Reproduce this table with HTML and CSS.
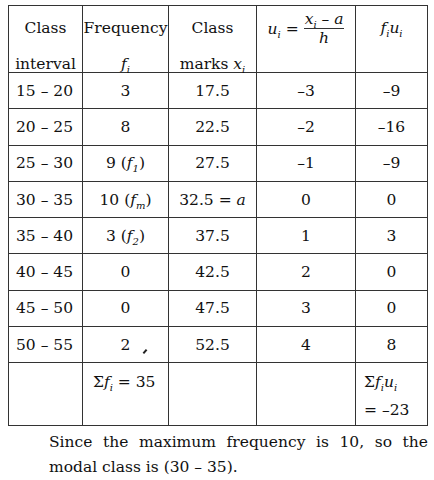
FILE: index.html
```html
<!DOCTYPE html>
<html lang="en">
<head>
  <meta charset="UTF-8" />
  <title>Modal class table</title>
  <link rel="stylesheet" href="styles.css">
</head>
<body>
  <table class="freq">
    <colgroup>
      <col class="c1"><col class="c2"><col class="c3"><col class="c4"><col class="c5">
    </colgroup>
    <tr class="head">
      <th><div class="hd">Class<br>interval</div></th>
      <th><div class="hd">Frequency<br><i>f</i><sub>i</sub></div></th>
      <th><div class="hd">Class<br>marks <i>x</i><sub>i</sub></div></th>
      <th class="formula-cell">
        <div class="formula">
          <span class="lhs"><i>u</i><sub>i</sub> = </span>
          <span class="frac"><span class="num"><i>x</i><sub>i</sub> – <i>a</i></span><span class="den"><i>h</i></span></span>
        </div>
      </th>
      <th><div class="hd"><i>f</i><sub>i</sub><i>u</i><sub>i</sub></div></th>
    </tr>
    <tr><td class="left">15 – 20</td><td>3</td><td>17.5</td><td>–3</td><td>–9</td></tr>
    <tr><td class="left">20 – 25</td><td>8</td><td>22.5</td><td>–2</td><td>–16</td></tr>
    <tr><td class="left">25 – 30</td><td>9 (<i>f</i><sub>1</sub>)</td><td>27.5</td><td>–1</td><td>–9</td></tr>
    <tr><td class="left">30 – 35</td><td>10 (<i>f</i><sub>m</sub>)</td><td>32.5 = <i>a</i></td><td>0</td><td>0</td></tr>
    <tr><td class="left">35 – 40</td><td>3 (<i>f</i><sub>2</sub>)</td><td>37.5</td><td>1</td><td>3</td></tr>
    <tr><td class="left">40 – 45</td><td>0</td><td>42.5</td><td>2</td><td>0</td></tr>
    <tr><td class="left">45 – 50</td><td>0</td><td>47.5</td><td>3</td><td>0</td></tr>
    <tr><td class="left">50 – 55</td><td class="mark-cell">2<span class="mark"></span></td><td>52.5</td><td>4</td><td>8</td></tr>
    <tr class="sum">
      <td></td>
      <td>Σ<i>f</i><sub>i</sub> = 35</td>
      <td></td>
      <td></td>
      <td>Σ<i>f</i><sub>i</sub><i>u</i><sub>i</sub><br>= –23</td>
    </tr>
  </table>
  <p class="note">Since the maximum frequency is 10, so the modal class is (30 – 35).</p>
</body>
</html>
```

FILE: styles.css
```css
body {
  margin: 0;
  background: #fff;
  color: #111;
  font-family: "DejaVu Serif", serif;
  font-size: 15.5px;
}
.freq {
  margin: 5px 0 0 8px;
  width: 419px;
  border-collapse: collapse;
  table-layout: fixed;
}
.c1 { width: 74px; }
.c2 { width: 86px; }
.c3 { width: 88px; }
.c4 { width: 99px; }
.c5 { width: 72px; }
.freq th,
.freq td {
  border: 1.5px solid #333;
  text-align: center;
  padding: 0;
  height: 35.3px;
  line-height: 20px;
}
.freq th {
  font-weight: normal;
  height: 62px;
  vertical-align: top;
  padding-top: 4px;
}
.hd {
  height: 54px;
  line-height: 36px;
  white-space: nowrap;
}
.freq td.left {
  text-align: left;
  padding-left: 7px;
}
sub {
  font-size: 10px;
  font-style: italic;
  line-height: 0;
  vertical-align: baseline;
  position: relative;
  top: 4px;
}
.formula-cell {
  padding-top: 4px !important;
}
.formula {
  display: flex;
  justify-content: center;
  align-items: center;
  line-height: 18px;
  white-space: nowrap;
}
.lhs {
  margin-right: 5px;
}
.frac {
  display: flex;
  flex-direction: column;
  align-items: stretch;
}
.num {
  padding: 0 1px;
  border-bottom: 1.5px solid #333;
}
.den {
  text-align: center;
}
.mark-cell {
  position: relative;
}
.mark {
  position: absolute;
  left: 61px;
  top: 22px;
  width: 2px;
  height: 5px;
  background: #222;
  transform: rotate(40deg);
}
.sum td {
  height: 57px;
  vertical-align: top;
  text-align: left;
  padding: 5px 6px 0 10px;
  line-height: 28px;
}
.sum td:last-child {
  padding-left: 8px;
}
.note {
  margin: 4px 6px 0 49px;
  text-align: justify;
  line-height: 25px;
}
```
